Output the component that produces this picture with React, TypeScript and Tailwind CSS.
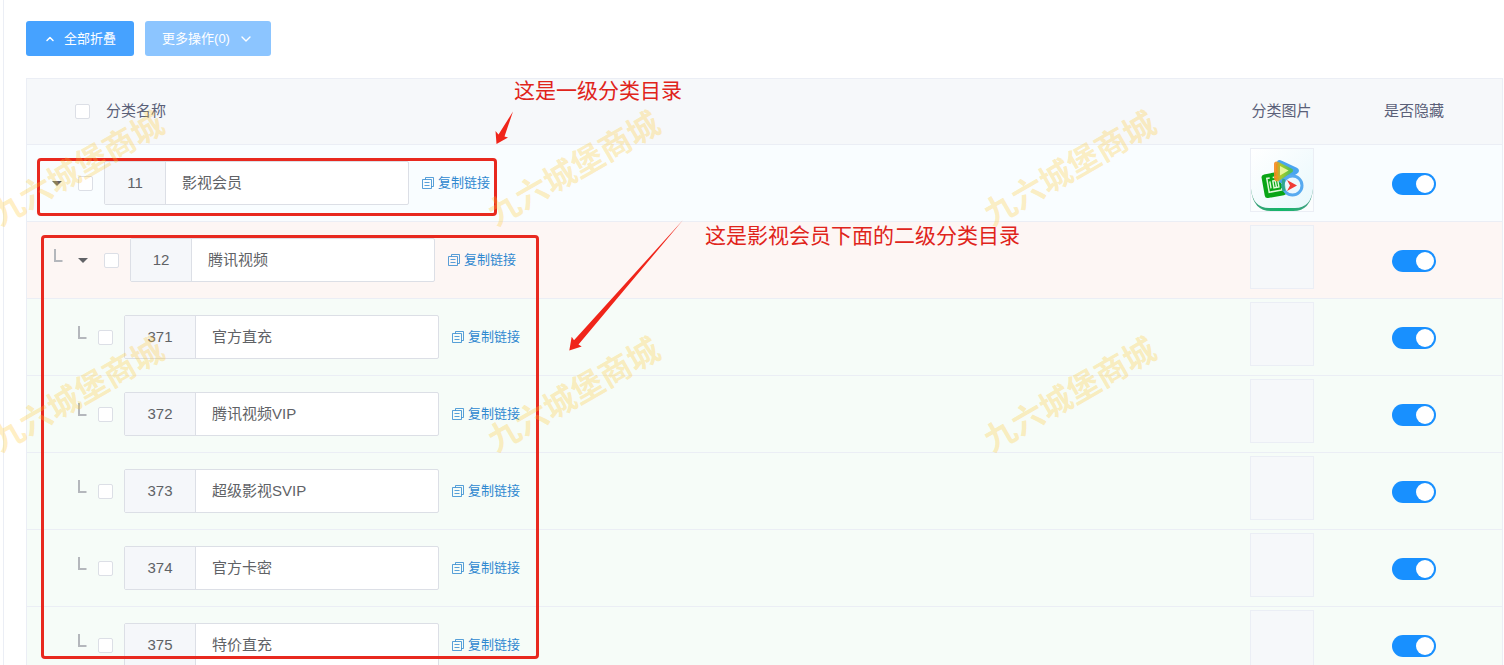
import React from "react";
import { ChevronDown, ChevronUp } from "lucide-react";

type Category = {
  id: number;
  name: string;
  level: 1 | 2 | 3;
  hasIcon?: boolean;
};

const categories: Category[] = [
  { id: 11, name: "影视会员", level: 1, hasIcon: true },
  { id: 12, name: "腾讯视频", level: 2 },
  { id: 371, name: "官方直充", level: 3 },
  { id: 372, name: "腾讯视频VIP", level: 3 },
  { id: 373, name: "超级影视SVIP", level: 3 },
  { id: 374, name: "官方卡密", level: 3 },
  { id: 375, name: "特价直充", level: 3 },
];

const rowColors = {
  1: "bg-[#f9fdff]",
  2: "bg-[#fdf6f4]",
  3: "bg-[#f6fcf8]",
};

const indents = {
  1: "pl-[25px]",
  2: "pl-[27px]",
  3: "pl-[51px]",
};

const checkboxClass =
  "block size-[15px] shrink-0 appearance-none rounded-xs border border-[#dcdfe6] bg-white checked:bg-[#409eff]";

function CopyIcon() {
  return (
    <svg className="size-3" viewBox="0 0 12 12" fill="none" stroke="currentColor" strokeOpacity="0.8">
      <path d="M3.500 2.500v-2h8v9h-2" />
      <path d="M0.500 2.500h9v9h-9z" />
      <path d="M2.500 5.500h5M2.500 8.500h5" />
    </svg>
  );
}

function BranchIcon() {
  return (
    <svg
      className="mb-2 h-[14px] w-[9px] shrink-0 text-[#b4b7bc]"
      viewBox="0 0 9 14"
      fill="none"
      stroke="currentColor"
      strokeWidth="2"
    >
      <path d="M1 0v12h7.500" />
    </svg>
  );
}

function ExpandButton() {
  return (
    <button type="button" aria-label="展开" className="shrink-0 text-[#606266]">
      <svg className="h-[5px] w-[10px]" viewBox="0 0 10 5" fill="currentColor">
        <path d="M0 0h10l-5 5z" />
      </svg>
    </button>
  );
}

function VideoIcon() {
  return (
    <svg className="size-full" viewBox="0 0 62 62">
      <defs>
        <linearGradient id="rim" x1="0" x2="1">
          <stop offset="0" stopColor="#3f9c7c" />
          <stop offset="0.5" stopColor="#12b868" />
          <stop offset="1" stopColor="#4a9c86" />
        </linearGradient>
        <linearGradient id="face" x1="0" x2="1" y1="0" y2="1">
          <stop offset="0" stopColor="#ffffff" />
          <stop offset="1" stopColor="#e9f8fc" />
        </linearGradient>
        <linearGradient id="play" x1="0" x2="1">
          <stop offset="0" stopColor="#f58a1f" />
          <stop offset="0.35" stopColor="#a8cf22" />
          <stop offset="1" stopColor="#55c04a" />
        </linearGradient>
      </defs>
      <rect width="62" height="62" fill="#fbfdfe" />
      <path d="M0 40h62q-2 22-20 22H20Q2 62 0 40z" fill="url(#rim)" />
      <path d="M0 0h62v40q-2 19-18 19H18Q2 59 0 40z" fill="url(#face)" />
      <g transform="rotate(-10 22 36)">
        <rect x="12" y="24" width="22" height="24" rx="3" fill="#0aa516" />
        <path
          d="M20 28.500h-3v14h13v-2M23 28.500h8v8"
          fill="none"
          stroke="#dff7d8"
          strokeWidth="1.500"
        />
        <path d="M19.500 32v7M22.500 32h5v7h-5zM25 32v7" fill="none" stroke="#dff7d8" strokeWidth="1.400" />
      </g>
      <path
        d="M28 13.500q0-1 2 0l15 7q2 1 0 2.500l-15 9z"
        fill="#49a5f0"
        stroke="#49a5f0"
        strokeWidth="4"
        strokeLinejoin="round"
      />
      <path
        d="M25 15q0-1 2 0l13 6.500-13 8.500q-2 1-2-1z"
        fill="url(#play)"
        stroke="url(#play)"
        strokeWidth="4"
        strokeLinejoin="round"
        fillOpacity="0.9"
        strokeOpacity="0.9"
      />
      <path d="M29 17l8.500 4.500-8.500 5z" fill="#e9f59a" />
      <circle cx="41.500" cy="36.500" r="9.500" fill="#e9f6ff" fillOpacity="0.7" stroke="#58aaf0" strokeWidth="3" />
      <path d="M33 30q-2 6 0 12" fill="none" stroke="#31a68e" strokeWidth="3" />
      <path d="M36 31l10 5.500-10 5.500 3-5.500z" fill="#f03a36" />
    </svg>
  );
}

function CategoryRow({ item }: { item: Category }) {
  return (
    <tr className={rowColors[item.level]}>
      <td className="h-[77px] border-b border-[#ebeef5] p-0">
        <div className={`flex items-center ${indents[item.level]}`}>
          {item.level > 1 && <BranchIcon />}
          {item.level === 2 && <span className="w-[15px]" />}
          {item.level < 3 && <ExpandButton />}
          <input
            type="checkbox"
            aria-label={item.name}
            className={`${checkboxClass} mr-[11px] ${item.level === 3 ? "ml-[11px]" : "ml-4"}`}
          />
          <div className="flex h-11 rounded-xs border border-[#dcdfe6] bg-white text-[15px] text-[#606266]">
            <label
              htmlFor={`category-${item.id}`}
              className={`flex items-center justify-center border-r border-[#dcdfe6] bg-[#f5f7fa] ${
                item.level === 3 ? "w-[71px]" : "w-[61px]"
              }`}
            >
              {item.id}
            </label>
            <input
              id={`category-${item.id}`}
              type="text"
              defaultValue={item.name}
              className="w-[242px] bg-transparent px-4 outline-none"
            />
          </div>
          <a href="#" className="ml-[13px] flex items-center gap-1 text-[13px] text-[#2f88d0]">
            <CopyIcon />
            复制链接
          </a>
        </div>
      </td>
      <td className="border-b border-[#ebeef5] px-0 pt-0 pb-[6px]">
        <div className="mx-auto size-16 border border-[#ebeef5] bg-[#f6f8fa]">
          {item.hasIcon && <VideoIcon />}
        </div>
      </td>
      <td className="border-b border-[#ebeef5] pt-[2px] pr-[22px] pb-0 pl-0">
        <input
          type="checkbox"
          role="switch"
          defaultChecked
          aria-label="是否隐藏"
          className="mx-auto flex h-[22px] w-11 appearance-none rounded-full bg-[#c0ccda] p-[2px] before:size-[18px] before:rounded-full before:bg-white checked:justify-end checked:bg-[#1890ff]"
        />
      </td>
    </tr>
  );
}

function Annotations() {
  return (
    <div className="pointer-events-none absolute inset-0 text-[21px] leading-[30px] text-[#e0241b]">
      <div className="absolute top-[158px] left-[37px] h-[58px] w-[460px] rounded-sm border-3 border-[#e8291f]" />
      <div className="absolute top-[235px] left-[41px] h-[424px] w-[498px] rounded-sm border-3 border-[#e8291f]" />
      <p className="absolute top-[76px] left-[514px] whitespace-nowrap">这是一级分类目录</p>
      <p className="absolute top-[221px] left-[705px] whitespace-nowrap">
        这是影视会员下面的二级分类目录
      </p>
      <svg className="absolute top-[110px] left-[490px] h-[250px] w-[200px]" viewBox="490 110 200 250" fill="#f0251a">
        <path d="M513 111.500l-8.500 25 3.500 1-11.500 6.500-1-13 3 3.500z" />
        <path d="M683 220l-104.500 124.500 3.200 2-12.400 4 2.400-13.700 2.300 3.500z" />
      </svg>
    </div>
  );
}

function Watermark() {
  return (
    <div
      aria-hidden="true"
      className="pointer-events-none absolute top-[56px] left-[-170px] grid grid-cols-[repeat(3,496px)] auto-rows-[226px]"
    >
      {[1, 2, 3, 4, 5, 6].map((n) => (
        <div key={n} className="flex items-center justify-center">
          <span className="-rotate-30 text-[32px] font-bold whitespace-nowrap text-[#ffc832]/30">
            九六城堡商城
          </span>
        </div>
      ))}
    </div>
  );
}

export default function App() {
  return (
    <div className="relative h-screen overflow-hidden bg-white font-['Liberation_Sans','Noto_Sans_CJK_SC',sans-serif]">
      <main className="ml-[3px] min-h-full border-l border-[#ebeef5] pt-[21px] pr-px pl-[22px]">
        <div className="flex gap-[11px] text-[13px] text-white">
          <button
            type="button"
            className="flex h-[35px] w-[108px] items-center justify-center gap-2 rounded-[3px] bg-[#46a2ff]"
          >
            <ChevronUp className="size-3" strokeWidth={3} />
            全部折叠
          </button>
          <button
            type="button"
            className="flex h-[35px] w-[126px] items-center justify-center gap-2 rounded-[3px] bg-[#8cc5ff]"
          >
            更多操作(0)
            <ChevronDown className="size-4" strokeWidth={2} />
          </button>
        </div>

        <table className="mt-[22px] w-full table-fixed border-separate border-spacing-0 border border-[#ebeef5]">
          <thead className="bg-[#f6f8fa] text-[15px] text-[#5a6078]">
            <tr>
              <th className="h-[66px] border-b border-[#ebeef5] p-0 font-normal">
                <label className="flex items-center gap-4 pl-12">
                  <input type="checkbox" className={checkboxClass} />
                  分类名称
                </label>
              </th>
              <th className="w-[133px] border-b border-[#ebeef5] p-0 font-normal">分类图片</th>
              <th className="w-[154px] border-b border-[#ebeef5] py-0 pr-[22px] pl-0 font-normal">
                是否隐藏
              </th>
            </tr>
          </thead>
          <tbody>
            {categories.map((item) => (
              <CategoryRow key={item.id} item={item} />
            ))}
          </tbody>
        </table>
      </main>
      <Annotations />
      <Watermark />
    </div>
  );
}
